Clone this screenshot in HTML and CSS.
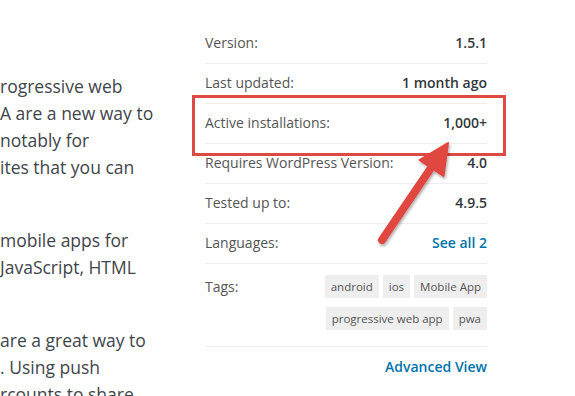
FILE: index.html
```html
<!DOCTYPE html>
<html lang="en">
<head>
    <meta charset="UTF-8">
    <title>Plugin details</title>
    <link rel="stylesheet" href="styles.css">
</head>
<body>
    <div class="page">
        <div class="description">
            <p>rogressive web<br>A are a new way to<br>notably for<br>ites that you can<br>&nbsp;</p>
            <p>mobile apps for<br>JavaScript, HTML<br>&nbsp;</p>
            <p>are a great way to<br>. Using push<br>rcounts to share</p>
        </div>

        <div class="sidebar">
            <ul class="meta">
                <li><span class="label">Version:</span><strong>1.5.1</strong></li>
                <li><span class="label">Last updated:</span><strong>1 month ago</strong></li>
                <li><span class="label">Active installations:</span><strong>1,000+</strong></li>
                <li><span class="label">Requires WordPress Version:</span><strong>4.0</strong></li>
                <li><span class="label">Tested up to:</span><strong>4.9.5</strong></li>
                <li><span class="label">Languages:</span><a href="#" class="link">See all 2</a></li>
                <li class="tags-row">
                    <span class="label">Tags:</span>
                    <div class="tags">
                        <a href="#">android</a>
                        <a href="#">ios</a>
                        <a href="#">Mobile App</a>
                        <a href="#">progressive web app</a>
                        <a href="#">pwa</a>
                    </div>
                </li>
            </ul>
            <div class="advanced"><a href="#" class="link">Advanced View</a></div>
        </div>
    </div>

    <!-- annotation layer -->
    <div class="highlight"></div>
    <svg class="arrow" width="575" height="396" viewBox="0 0 575 396">
        <defs>
            <filter id="shadow" x="-20%" y="-20%" width="140%" height="140%">
                <feDropShadow dx="1" dy="2" stdDeviation="1.5" flood-color="#000" flood-opacity="0.35"/>
            </filter>
        </defs>
        <g filter="url(#shadow)" fill="#e0473f" stroke="#e0473f">
            <line x1="382" y1="240" x2="433" y2="165" stroke-width="8" stroke-linecap="round"/>
            <polygon points="448,143 419.5,160 443.5,176" stroke-width="2" stroke-linejoin="round"/>
        </g>
    </svg>
</body>
</html>
```

FILE: styles.css
```css
body {
    margin: 0;
    font-family: "Open Sans", "Liberation Sans", sans-serif;
    background: #fff;
    color: #32373c;
    width: 575px;
    height: 396px;
    overflow: hidden;
    position: relative;
}

.page {
    display: flex;
    gap: 25px;
    height: 396px;
    overflow: hidden;
}

.description {
    width: 180px;
    padding-top: 73px;
    font-size: 17.5px;
    line-height: 27px;
    color: #40454a;
    white-space: nowrap;
    overflow: hidden;
}

.description p {
    margin: 0 0 19px;
}

.sidebar {
    width: 282px;
    padding-top: 24px;
    font-size: 14px;
    color: #555;
}

.meta {
    list-style: none;
    margin: 0;
    padding: 0;
}

.meta li {
    display: flex;
    justify-content: space-between;
    align-items: center;
    padding: 9px 0 10px;
    line-height: 20px;
    border-bottom: 1px solid #eee;
}

.meta strong {
    font-weight: 600;
    color: #32373c;
}

.link {
    color: #0073aa;
    font-weight: 600;
    text-decoration: none;
}

.meta li.tags-row {
    align-items: flex-start;
    padding: 11px 0 16px;
}

.tags-row .label {
    line-height: 23px;
}

.tags {
    width: 170px;
    display: flex;
    flex-wrap: wrap;
    justify-content: flex-end;
    gap: 9px 4px;
}

.tags a {
    background: #eee;
    color: #555;
    font-size: 11.5px;
    line-height: 23px;
    padding: 0 6px;
    text-decoration: none;
}

.advanced {
    text-align: right;
    padding-top: 10px;
    line-height: 20px;
}

.highlight {
    position: absolute;
    left: 192px;
    top: 95px;
    width: 308px;
    height: 55px;
    border: 3.5px solid #dc4a43;
}

.arrow {
    position: absolute;
    left: 0;
    top: 0;
    pointer-events: none;
}
```
